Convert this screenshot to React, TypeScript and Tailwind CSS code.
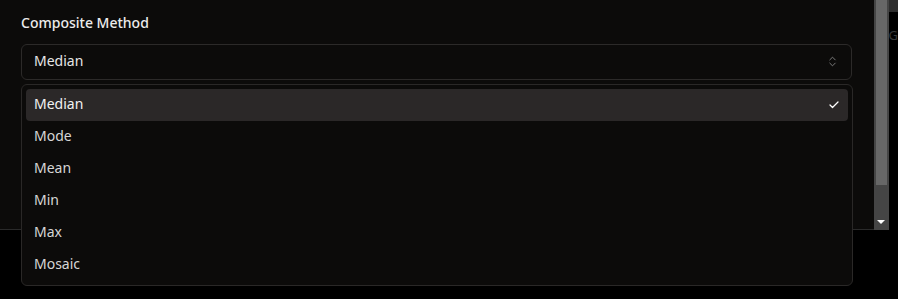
import { Check, ChevronsUpDown } from "lucide-react";

const options = ["Median", "Mode", "Mean", "Min", "Max", "Mosaic"];

export default function App() {
  return (
    <div
      className="relative h-[299px] w-[898px] overflow-hidden bg-black"
      style={{ fontFamily: '"Noto Sans", "Open Sans", sans-serif' }}
    >
      <div className="flex h-[230px]">
        <div className="w-[876px] border-b border-[#2a2a2a] bg-[#0c0b0a] px-[21px] pt-[14px]">
          <p className="text-[14px] font-medium leading-[18px] text-[#ececec]">Composite Method</p>
          <button className="mt-[12px] flex h-[36px] w-[831px] items-center justify-between rounded-[6px] border border-[#2c2a29] px-[12px] pb-[3px] text-[14px] text-[#e6e6e6]">
            <span>Median</span>
            <ChevronsUpDown className="mt-[2px] h-[13px] w-[13px] text-[#8a8a8a]" strokeWidth={1.6} />
          </button>
        </div>
        <div className="flex w-[15px] flex-col bg-[#454545] px-[2px]">
          <div className="h-[185px] bg-[#676767]" />
          <div className="flex flex-1 items-end justify-center pb-[6px]">
            <div className="h-0 w-0 border-x-[4px] border-t-[4px] border-x-transparent border-t-white" />
          </div>
        </div>
        <div className="flex-1 bg-black">
          <div className="h-[12px] bg-[#2e2e2e]" />
          <p className="mt-[14px] text-[13px] text-[#3a3a3a]">G</p>
        </div>
      </div>

      <div className="absolute left-[21px] top-[84px] w-[832px] rounded-[6px] border border-[#2a2827] bg-[#0c0b0a] p-[4px]">
        {options.map((o, i) => (
          <div
            key={o}
            className={
              i === 0
                ? "flex h-[32px] items-center justify-between rounded-[4px] bg-[#2b2828] px-[8px] pb-[3px] text-[14px] text-[#f2f2f2]"
                : "flex h-[32px] items-center px-[8px] pb-[3px] text-[14px] text-[#d6d6d6]"
            }
          >
            <span>{o}</span>
            {i === 0 && <Check className="mt-[3px] h-[12px] w-[12px] text-white" strokeWidth={2.5} />}
          </div>
        ))}
      </div>
    </div>
  );
}
